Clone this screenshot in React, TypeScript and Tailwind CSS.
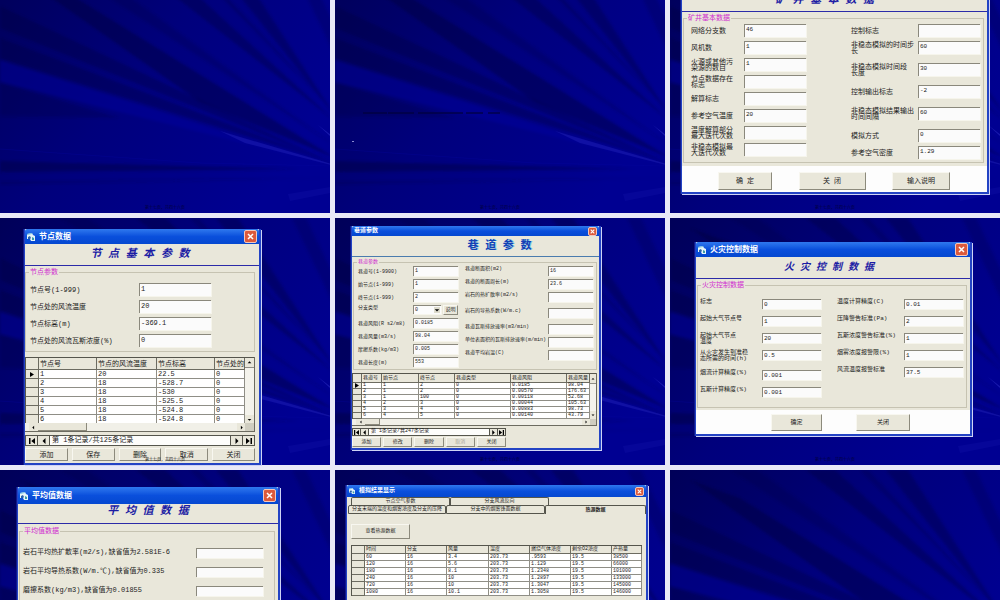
import React, { useId } from 'react';

type FieldData = { label: string; value?: string; gap?: string };

type GridData = {
    headers: string[];
    widths: string[];
    rows: string[][];
};

const mineLeft: FieldData[] = [
    { label: '网络分支数', value: '46', gap: 'mb-1' },
    { label: '风机数', value: '1', gap: 'mb-1' },
    { label: '火源或其他污\n染源的数目', value: '1', gap: 'mb-1' },
    { label: '节点数据存在\n标志', gap: 'mb-1' },
    { label: '解算标志', gap: 'mb-1' },
    { label: '参考空气温度', value: '20', gap: 'mb-1' },
    { label: '温度解算部分\n最大迭代次数', gap: 'mb-1' },
    { label: '非稳态模拟最\n大迭代次数' },
];

const mineRight: FieldData[] = [
    { label: '控制标志', gap: 'mb-1' },
    { label: '非稳态模拟的时间步\n长', value: '60', gap: 'mb-[9px]' },
    { label: '非稳态模拟时间段\n长度', value: '30', gap: 'mb-[9px]' },
    { label: '控制输出标志', value: '-2', gap: 'mb-[9px]' },
    { label: '非稳态模拟结果输出\n时间间隔', value: '60', gap: 'mb-[9px]' },
    { label: '模拟方式', value: '0', gap: 'mb-1' },
    { label: '参考空气密度', value: '1.29' },
];

const nodeFields: FieldData[] = [
    { label: '节点号(1-999)', value: '1', gap: 'mb-1' },
    { label: '节点处的风流温度', value: '20', gap: 'mb-1' },
    { label: '节点标高(m)', value: '-369.1', gap: 'mb-1' },
    { label: '节点处的风流瓦斯浓度(%)', value: '0' },
];

const nodeGrid: GridData = {
    headers: ['节点号', '节点的风流温度', '节点标高', '节点处的'],
    widths: ['w-[58px]', 'w-[60px]', 'w-[58px]', ''],
    rows: [
        ['1', '20', '22.5', '0'],
        ['2', '18', '-528.7', '0'],
        ['3', '18', '-530', '0'],
        ['4', '18', '-525.5', '0'],
        ['5', '18', '-524.8', '0'],
        ['6', '18', '-524.8', '0'],
    ],
};

const roadRight: FieldData[] = [
    { label: '巷道断面积(m2)', value: '16', gap: 'mb-[3px]' },
    { label: '巷道的断面周长(m)', value: '23.6', gap: 'mb-[3px]' },
    { label: '岩石的热扩散率(m2/s)', gap: 'mb-[6px]' },
    { label: '岩石的导热系数(W/m.c)', gap: 'mb-[6px]' },
    { label: '巷道瓦斯排放速率(m3/min)', gap: 'mb-[3px]' },
    { label: '单位表面积的瓦斯排放速率(m/min)', gap: 'mb-[3px]' },
    { label: '巷道平均岩温(C)' },
];

const roadTop: FieldData[] = [
    { label: '巷道号(1-9900)', value: '1', gap: 'mb-[3px]' },
    { label: '始节点(1-999)', value: '1', gap: 'mb-[3px]' },
    { label: '终节点(1-999)', value: '2', gap: 'mb-[3px]' },
];

const roadBottom: FieldData[] = [
    { label: '巷道风阻(R s2/m8)', value: '0.0185', gap: 'mb-[3px]' },
    { label: '巷道风量(m3/s)', value: '98.04', gap: 'mb-[3px]' },
    { label: '摩擦系数(kg/m3)', value: '0.005', gap: 'mb-[3px]' },
    { label: '巷道长度(m)', value: '553' },
];

const roadGrid: GridData = {
    headers: ['巷道号', '始节点', '终节点', '巷道类型', '巷道风阻', '巷道风量'],
    widths: ['w-[20px]', 'w-[37px]', 'w-[36px]', 'w-[56px]', 'w-[56px]', ''],
    rows: [
        ['1', '1', '2', '0', '0.0185', '98.04'],
        ['2', '1', '2', '0', '0.00570', '176.63'],
        ['3', '1', '100', '0', '0.00118', '52.68'],
        ['4', '2', '3', '0', '0.00044', '105.63'],
        ['5', '3', '4', '0', '0.00883', '98.73'],
        ['6', '4', '5', '0', '0.00140', '43.79'],
    ],
};

const fireLeft: FieldData[] = [
    { label: '标志', value: '0', gap: 'mb-[7px]' },
    { label: '起始大气节点号', value: '1', gap: 'mb-[7px]' },
    { label: '起始大气节点\n温度', value: '20', gap: 'mb-[7px]' },
    { label: '从火灾发生到准稳\n态所需的时间(h)', value: '0.5', gap: 'mb-[10px]' },
    { label: '烟流计算精度(%)', value: '0.001', gap: 'mb-[7px]' },
    { label: '瓦斯计算精度(%)', value: '0.001' },
];

const fireRight: FieldData[] = [
    { label: '温度计算精度(C)', value: '0.01', gap: 'mb-[7px]' },
    { label: '压降警告标准(Pa)', value: '2', gap: 'mb-[7px]' },
    { label: '瓦斯浓度警告标准(%)', value: '1', gap: 'mb-[7px]' },
    { label: '烟雾浓度报警限(%)', value: '1', gap: 'mb-[7px]' },
    { label: '风流温度报警标准', value: '37.5' },
];

const averageFields: FieldData[] = [
    { label: '岩石平均热扩散率(m2/s),缺省值为2.581E-6', gap: 'mb-[9px]' },
    { label: '岩石平均导热系数(W/m.℃),缺省值为0.335', gap: 'mb-[9px]' },
    { label: '磨擦系数(kg/m3),缺省值为0.01855' },
];

const resultGrid: GridData = {
    headers: ['时间', '分支', '风量', '温度', '燃烧气体浓度', '剩余O2浓度', '产热量'],
    widths: ['w-[41px]', 'w-[41px]', 'w-[42px]', 'w-[41px]', 'w-[41px]', 'w-[41px]', ''],
    rows: [
        ['60', '16', '3.4', '203.73', '.9593', '19.5', '38500'],
        ['120', '16', '5.6', '203.73', '1.129', '19.5', '66000'],
        ['180', '16', '8.1', '203.73', '1.2348', '19.5', '101000'],
        ['240', '16', '10', '203.73', '1.2897', '19.5', '133000'],
        ['720', '16', '10', '203.73', '1.3047', '19.5', '145000'],
        ['1080', '16', '10.1', '203.73', '1.3058', '19.5', '146000'],
    ],
};

const Rays: React.FC = () => {
    const base = useId();
    const soft = useId();
    return (
        <svg className="absolute inset-0 h-full w-full" viewBox="0 0 330 247" preserveAspectRatio="none" aria-hidden="true">
            <defs>
                <linearGradient id={base} x1="0" y1="0" x2="1" y2="0.6">
                    <stop offset="0" stopColor="#000058" />
                    <stop offset="0.5" stopColor="#00007c" />
                    <stop offset="1" stopColor="#000092" />
                </linearGradient>
                <filter id={soft} x="-5%" y="-5%" width="110%" height="110%">
                    <feGaussianBlur stdDeviation="1.8" />
                </filter>
            </defs>
            <rect width="330" height="247" fill={`url(#${base})`} />
            <g fill="#000038" filter={`url(#${soft})`}>
                <path d="M0 40 L0 62 L335 198 Z" opacity="0.3" />
                <path d="M0 72 L0 92 L335 198 Z" opacity="0.3" />
                <path d="M20 10 L70 28 L335 192 L200 136 Z" opacity="0.4" />
                <path d="M60 0 L88 0 L335 180 Z" opacity="0.2" />
                <path d="M136 0 L165 0 L335 155 Z" opacity="0.35" />
                <path d="M190 0 L198 0 L335 146 Z" opacity="0.25" />
                <path d="M216 0 L238 0 L335 150 Z" opacity="0.35" />
                <path d="M292 0 L306 0 L335 60 L335 90 Z" opacity="0.2" />
                <path d="M0 117 L0 150 L120 152 Z" opacity="0.25" />
                <path d="M0 195 L0 206 L300 203 Z" opacity="0.4" />
                <path d="M0 216 L0 218 L330 212 Z" opacity="0.3" />
            </g>
            <path d="M0 94 L0 116 L335 200 L230 168 Z" fill="#0000a4" opacity="0.4" filter={`url(#${soft})`} />
            <path d="M220 165 L335 199 L335 200 L245 177 Z" fill="#2020b4" opacity="0.5" />
            <path d="M318 159 L331 169 L331 171 Z" fill="#2a2ac0" opacity="0.6" />
            <path d="M288 228 L330 221 L330 227 L290 235 Z" fill="#1212a6" opacity="0.35" />
            <path d="M0 183 L200 197 L330 200" stroke="#0808a0" strokeWidth="1" fill="none" opacity="0.3" />
        </svg>
    );
};

const Slide: React.FC<{ className?: string; footer?: string; children?: React.ReactNode }> = ({ className = '', footer = 'text-[#00003c]', children }) => (
    <section className={`relative flex min-h-[247px] min-w-0 flex-col bg-[#000078] ${className}`}>
        <Rays />
        {children}
        <p className={`absolute inset-x-0 bottom-[2px] text-center text-[4px] leading-[5px] ${footer}`}>第十七页，共四十六页</p>
    </section>
);

const AppIcon: React.FC<{ className: string }> = ({ className }) => (
    <svg className={className} viewBox="0 0 8 8" aria-hidden="true">
        <path d="M0 1 L5 0 L6 2 L8 3 L8 8 L4 8 L3 6 L0 6 Z" fill="#e6f4f8" />
        <path d="M0 1 L5 0 L5 1 L0 2 Z" fill="#7cc4e0" />
        <path d="M1 4 L3 3 L4 5 L3 6 L1 6 Z" fill="#2a62a8" />
        <path d="M5 4 L7 5 L7 7 L5 7 Z" fill="#3c9ca8" />
    </svg>
);

const Dialog: React.FC<{
    title: string;
    heading?: string;
    small?: boolean;
    icon?: boolean;
    titleHeight: string;
    headingStyle?: string;
    className?: string;
    children: React.ReactNode;
}> = ({ title, heading, small = false, icon = true, titleHeight, headingStyle = '', className = '', children }) => (
    <div className={`relative flex flex-col border-r-2 border-b-2 border-l border-[#2343c4] bg-[#e9e7da] shadow-[1px_1px_0_#cfd3f5,-1px_0_0_#101a8c] ${className}`}>
        <header className={`flex items-center justify-between rounded-t-[2px] bg-linear-to-b from-[#2f78ee] via-[#0a4fdc] to-[#0548d0] px-0.5 text-white ${titleHeight}`}>
            <span className={`flex items-center gap-1 font-bold ${small ? 'text-[6px] leading-[8px]' : 'text-[8px] leading-[10px]'}`}>
                {icon && <AppIcon className={small ? 'h-[6px] w-[6px]' : 'h-2 w-2'} />}
                {title}
            </span>
            <button
                type="button"
                aria-label="关闭窗口"
                className={`flex items-center justify-center rounded-[2px] border border-[#f4c8bc] bg-[#dc5a3c] ${small ? 'h-[9px] w-[9px]' : 'h-[13px] w-[13px]'}`}
            >
                <svg className={small ? 'h-[5px] w-[5px]' : 'h-[7px] w-[7px]'} viewBox="0 0 7 7" aria-hidden="true">
                    <path d="M1 1 L6 6 M6 1 L1 6" stroke="#ffffff" strokeWidth="1.5" />
                </svg>
            </button>
        </header>
        {heading && (
            <h2 className={`flex items-center justify-center border-b font-bold whitespace-pre ${headingStyle}`}>{heading}</h2>
        )}
        {children}
    </div>
);

const navyHeading = 'italic border-[#2b2ba8] text-[#1c1ca4]';

const Group: React.FC<{ title: string; small?: boolean; className?: string; children: React.ReactNode }> = ({ title, small = false, className = '', children }) => (
    <fieldset className={`min-w-0 border border-[#c6c3b2] ${className}`}>
        <legend className={`ml-[3px] px-px text-[#d02cd0] ${small ? 'text-[5px] leading-[6px]' : 'text-[7px] leading-[7px]'}`}>{title}</legend>
        {children}
    </fieldset>
);

const sunken = 'border-t border-l border-[#8a887c] bg-[#fbfbfb] shadow-[1px_1px_0_#f6f5ec]';

const Field: React.FC<FieldData & { align?: string; labelStyle: string; inputStyle: string }> = ({ label, value = '', gap = '', align = 'items-start', labelStyle, inputStyle }) => {
    const id = useId();
    return (
        <div className={`flex justify-between ${align} ${gap}`}>
            <label htmlFor={id} className={`whitespace-pre ${labelStyle}`}>{label}</label>
            <input id={id} defaultValue={value} className={`shrink-0 rounded-none px-px ${sunken} ${inputStyle}`} />
        </div>
    );
};

const VbButton: React.FC<{ className: string; disabled?: boolean; children: React.ReactNode }> = ({ className, disabled, children }) => (
    <button
        type="button"
        disabled={disabled}
        className={`border-t border-r border-b border-l border-t-[#f8f7f0] border-r-[#8c8a7c] border-b-[#8c8a7c] border-l-[#f8f7f0] bg-[#e9e7da] whitespace-pre disabled:text-[#a8a698] ${className}`}
    >
        {children}
    </button>
);

const DataGrid: React.FC<{ data: GridData; marker: string; head: string; cell: string; showPointer?: boolean }> = ({ data, marker, head, cell, showPointer = false }) => (
    <table className="w-full table-fixed border-separate border-spacing-0 border-t border-l border-[#55554c] bg-white text-left">
        <colgroup>
            <col className={marker} />
            {data.widths.map((width, i) => <col key={i} className={width} />)}
        </colgroup>
        <thead className="bg-[#e9e7da]">
            <tr>
                <th className={`border-r border-b border-[#6c6b60] p-0 ${head}`} />
                {data.headers.map(name => (
                    <th key={name} scope="col" className={`border-r border-b border-[#6c6b60] p-0 pl-px font-normal whitespace-nowrap ${head}`}>{name}</th>
                ))}
            </tr>
        </thead>
        <tbody>
            {data.rows.map((row, r) => (
                <tr key={r}>
                    <td className={`border-r border-b border-[#6c6b60] bg-[#e9e7da] p-0 ${cell}`}>
                        {showPointer && r === 0 && (
                            <svg className="mx-auto block h-[5px] w-[4px]" viewBox="0 0 4 5" aria-hidden="true"><path d="M0 0 L4 2.5 L0 5 Z" /></svg>
                        )}
                    </td>
                    {row.map((text, c) => (
                        <td key={c} className={`border-r border-b border-[#8f8e86] p-0 pl-px whitespace-nowrap ${cell}`}>{text}</td>
                    ))}
                </tr>
            ))}
        </tbody>
    </table>
);

const arrowPaths = {
    up: 'M1 5 L4 2 L7 5 Z',
    down: 'M1 3 L4 6 L7 3 Z',
    left: 'M5 1 L2 4 L5 7 Z',
    right: 'M3 1 L6 4 L3 7 Z',
    prev: 'M6 0 L2 4 L6 8 Z',
    next: 'M2 0 L6 4 L2 8 Z',
    first: 'M0 0 H2 V8 H0 Z M8 0 L3 4 L8 8 Z',
    last: 'M6 0 H8 V8 H6 Z M0 0 L5 4 L0 8 Z',
};

const ArrowButton: React.FC<{ kind: keyof typeof arrowPaths; label: string; box: string; icon: string }> = ({ kind, label, box, icon }) => (
    <button type="button" aria-label={label} className={`flex shrink-0 items-center justify-center bg-[#e9e7da] ${box}`}>
        <svg className={icon} viewBox="0 0 8 8" aria-hidden="true"><path d={arrowPaths[kind]} /></svg>
    </button>
);

const GridPane: React.FC<{ body: string; bar: string; side: string; icon: string; thumb: string; children: React.ReactNode }> = ({ body, bar, side, icon, thumb, children }) => (
    <div className="border-r border-b border-[#6c6b60]">
        <div className={`flex ${body}`}>
            <div className="min-w-0 flex-1 overflow-hidden">{children}</div>
            <div className={`flex shrink-0 flex-col justify-between border-t border-[#55554c] bg-[#f4f3ec] ${side}`}>
                <ArrowButton kind="up" label="向上滚动" box="h-[10px] w-full border-b border-[#8f8e86]" icon={icon} />
                <ArrowButton kind="down" label="向下滚动" box="h-[8px] w-full" icon={icon} />
            </div>
        </div>
        <div className={`flex items-stretch bg-[#f1f0e8] ${bar}`}>
            <ArrowButton kind="left" label="向左滚动" box="ml-1 w-[9px]" icon={icon} />
            <div className={`border-r border-b border-[#8c8a7c] bg-[#e9e7da] ${thumb}`} />
            <div className="flex-1" />
            <ArrowButton kind="right" label="向右滚动" box="w-[8px]" icon={icon} />
            <div className={`bg-[#cfcdc0] ${side}`} />
        </div>
    </div>
);

const RecordNav: React.FC<{ text: string; className: string; box: string; icon: string }> = ({ text, className, box, icon }) => (
    <nav className={`flex items-stretch border border-[#55554c] bg-[#fdfdfb] ${className}`}>
        <ArrowButton kind="first" label="第一条" box={`border-r border-[#55554c] ${box}`} icon={icon} />
        <ArrowButton kind="prev" label="上一条" box={`border-r border-[#55554c] ${box}`} icon={icon} />
        <span className="flex flex-1 items-center pl-0.5 whitespace-pre">{text}</span>
        <ArrowButton kind="next" label="下一条" box={`border-l border-[#55554c] ${box}`} icon={icon} />
        <ArrowButton kind="last" label="最后一条" box={`border-l border-[#55554c] ${box}`} icon={icon} />
    </nav>
);

const mineLabel = 'flex h-[13px] items-center text-[7px] leading-[6px]';
const mineInput = 'h-[13px] w-[62px] pb-[3px] text-[6px]';

const MineDialog: React.FC = () => (
    <Dialog title="矿井基本数据" heading="矿 井 基 本 数 据" titleHeight="h-[16px]" headingStyle={`h-[22px] pr-5 text-[11px] ${navyHeading}`}>
        <Group title="矿井基本数据" className="mt-[3px] mr-[3px] ml-px">
            <div className="flex justify-between pt-0.5 pr-[3px] pb-[3px] pl-[7px]">
                <div className="w-[115px]">
                    {mineLeft.map(f => <Field key={f.label} {...f} align="items-center" labelStyle={mineLabel} inputStyle={mineInput} />)}
                </div>
                <div className="w-[129px]">
                    {mineRight.map(f => <Field key={f.label} {...f} align="items-center" labelStyle={mineLabel} inputStyle={mineInput} />)}
                </div>
            </div>
        </Group>
        <div className="mt-[3px] flex justify-between bg-[#fdfdfd] pt-[6px] pr-[37px] pb-0.5 pl-9 text-[7px]">
            <VbButton className="h-[18px] w-[54px]">确 定</VbButton>
            <VbButton className="h-[18px] w-[67px]">关 闭</VbButton>
            <VbButton className="h-[18px] w-[58px]">输入说明</VbButton>
        </div>
    </Dialog>
);

const NodeDialog: React.FC = () => (
    <Dialog title="节点数据" heading="节 点 基 本 参 数" titleHeight="h-[15px]" headingStyle={`h-[22px] pr-1 text-[11px] ${navyHeading}`}>
        <Group title="节点参数" className="mt-[3px] mr-1">
            <div className="pt-[7px] pr-[43px] pb-1 pl-1">
                {nodeFields.map(f => <Field key={f.label} {...f} align="items-center" labelStyle="text-[7px] leading-[8px]" inputStyle="h-[13px] w-[72px] pb-[3px] text-[7px]" />)}
            </div>
        </Group>
        <div className="mt-[5px] mr-1">
            <GridPane body="h-[66px]" bar="h-[8px]" side="w-[9px]" icon="h-[5px] w-[5px]" thumb="w-[49px]">
                <DataGrid data={nodeGrid} marker="w-[13px]" head="h-[12px] text-[7px] leading-[10px]" cell="h-[9px] text-[7px] leading-[8px]" showPointer />
            </GridPane>
            <RecordNav text="第 1条记录/共125条记录" className="mt-[3px] h-[11px] text-[7px]" box="w-[12px]" icon="h-[6px] w-[6px]" />
            <div className="mt-[2px] mb-0.5 flex gap-1 text-[7px]">
                {['添加', '保存', '删除', '取消', '关闭'].map(name => <VbButton key={name} className="h-[13px] flex-1 leading-[8px]">{name}</VbButton>)}
            </div>
        </div>
    </Dialog>
);

const roadLabel = 'text-[5px] leading-[6px] pt-[3px]';
const roadInput = 'h-[10px] w-[45px] pb-[2px] text-[5px]';

const RoadDialog: React.FC = () => (
    <Dialog title="巷道参数" heading="巷 道 参 数" small icon={false} titleHeight="h-[10px]" headingStyle="h-[21px] pl-12 text-[11px] border-[#4a7cae] text-[#1440b4] [text-shadow:1px_0_0_#7fd0ea]">
        <Group title="巷道参数" small className="mt-[2px] mr-[2px] ml-px">
            <div className="flex justify-between pt-px pr-[3px] pb-[2px] pl-1">
                <div className="w-[100px]">
                    {roadTop.map(f => <Field key={f.label} {...f} labelStyle={roadLabel} inputStyle={roadInput} />)}
                    <div className="mb-[3px] flex h-[10px] items-start">
                        <label htmlFor="branch-type" className="w-[55px] text-[5px] leading-[6px]">分支类型</label>
                        <div className={`flex h-[9px] w-[28px] items-stretch ${sunken}`}>
                            <select id="branch-type" defaultValue="0" className="min-w-0 flex-1 appearance-none bg-transparent pl-px text-[5px] leading-[8px]">
                                <option value="0">0</option>
                                <option value="1">1</option>
                            </select>
                            <svg className="my-px mr-px h-[6px] w-[6px] bg-[#dddbcc]" viewBox="0 0 8 8" aria-hidden="true"><path d={arrowPaths.down} /></svg>
                        </div>
                        <VbButton className="ml-[2px] h-[10px] w-[15px] text-[5px] leading-[6px]">说明</VbButton>
                    </div>
                    {roadBottom.map(f => <Field key={f.label} {...f} labelStyle={roadLabel} inputStyle={roadInput} />)}
                </div>
                <div className="w-[128px]">
                    {roadRight.map(f => <Field key={f.label} {...f} labelStyle="text-[5px] leading-[6px]" inputStyle={roadInput} />)}
                </div>
            </div>
        </Group>
        <div className="mt-[3px] mr-[2px]">
            <GridPane body="h-[46px]" bar="h-[6px]" side="w-[6px]" icon="h-[4px] w-[4px]" thumb="w-[15px]">
                <DataGrid data={roadGrid} marker="w-[9px]" head="h-[9px] text-[5px] leading-[7px]" cell="h-[6px] text-[5px] leading-[5px]" showPointer />
            </GridPane>
        </div>
        <div className="mr-auto w-[154px]">
            <RecordNav text="第 1条记录/共247条记录" className="mt-[2px] h-[8px] text-[5px]" box="w-[8px]" icon="h-[5px] w-[5px]" />
            <div className="mt-px mb-px flex gap-[2px] text-[5px]">
                {['添加', '修改', '删除', '取消', '关闭'].map(name => <VbButton key={name} disabled={name === '取消'} className="h-[10px] flex-1 leading-[6px]">{name}</VbButton>)}
            </div>
        </div>
    </Dialog>
);

const fireLabel = 'h-[10px] text-[6px] leading-[6px]';
const fireInput = 'h-[10px] w-[59px] text-[6px]';

const FireDialog: React.FC = () => (
    <Dialog title="火灾控制数据" heading="火 灾 控 制 数 据" titleHeight="h-[15px]" headingStyle={`h-[22px] pr-2 text-[10px] ${navyHeading}`}>
        <Group title="火灾控制数据" className="mt-[3px] mr-[3px] ml-px">
            <div className="flex justify-between pt-[10px] pr-[3px] pb-[10px] pl-[2px]">
                <div className="w-[121px]">
                    {fireLeft.map(f => <Field key={f.label} {...f} labelStyle={fireLabel} inputStyle={fireInput} />)}
                </div>
                <div className="w-[126px]">
                    {fireRight.map(f => <Field key={f.label} {...f} labelStyle={fireLabel} inputStyle={fireInput} />)}
                </div>
            </div>
        </Group>
        <div className="mt-[2px] flex gap-[34px] bg-[#fdfdfd] pt-1 pb-[3px] pl-[75px] text-[6px]">
            <VbButton className="h-[17px] w-[51px]">确定</VbButton>
            <VbButton className="h-[17px] w-[54px]">关闭</VbButton>
        </div>
    </Dialog>
);

const AverageDialog: React.FC = () => (
    <Dialog title="平均值数据" heading="平 均 值 数 据" titleHeight="h-[17px]" headingStyle={`h-[20px] pb-1 text-[11px] ${navyHeading}`} className="flex-1">
        <Group title="平均值数据" className="mt-1 mr-[3px] ml-px flex-1">
            <div className="pt-[13px] pr-[11px] pl-[3px]">
                {averageFields.map(f => <Field key={f.label} {...f} labelStyle="text-[7px] leading-[8px]" inputStyle="h-[10px] w-[67px] text-[7px]" />)}
            </div>
        </Group>
    </Dialog>
);

const tab = 'rounded-t-[2px] border-t border-r border-l border-[#55554c] text-center text-[5px] leading-[7px] whitespace-nowrap';

const ResultDialog: React.FC = () => (
    <Dialog title="模拟结果显示" small titleHeight="h-[12px]" className="flex-1">
        <div role="tablist">
            <div className="flex pl-1">
                <button type="button" role="tab" className={`h-[8px] w-[99px] ${tab}`}>节点空气参数</button>
                <button type="button" role="tab" className={`h-[8px] w-[99px] ${tab}`}>分支风流反向</button>
            </div>
            <div className="flex pl-px">
                <button type="button" role="tab" className={`h-[9px] w-[98px] border-b ${tab}`}>分支末端的温度和烟雾浓度及分支的压降</button>
                <button type="button" role="tab" className={`h-[9px] w-[99px] border-b ${tab}`}>分支中的烟雾锋面数据</button>
                <button type="button" role="tab" aria-selected="true" className={`h-[9px] flex-1 font-bold ${tab}`}>热源数据</button>
            </div>
        </div>
        <VbButton className="mt-[10px] ml-1 h-[15px] w-[59px] text-[5px]">查看热源数据</VbButton>
        <div className="mt-[6px] mr-1 ml-1">
            <DataGrid data={resultGrid} marker="w-[13px]" head="h-[8px] text-[5px] leading-[7px]" cell="h-[7px] text-[5px] leading-[6px]" />
        </div>
    </Dialog>
);

const App: React.FC = () => (
    <main className="h-screen overflow-hidden bg-[#e9e9f7] font-['Liberation_Mono','Noto_Sans_CJK_SC',monospace] text-[#1c1c1c]">
        <div className="-mt-[34px] grid grid-cols-3 gap-[5px]">
            <Slide />
            <Slide>
                <svg className="absolute inset-0 h-full w-full" viewBox="0 0 330 247" aria-hidden="true">
                    <path d="M28 147 H165" stroke="#00003c" strokeWidth="2" strokeDasharray="24 1 26 4 45 3 17 5" opacity="0.6" />
                    <rect x="17" y="175" width="2" height="1" fill="#8a8ad0" />
                </svg>
            </Slide>
            <Slide className="justify-end px-[11px] pb-[19px]">
                <MineDialog />
            </Slide>
            <Slide className="pt-[11px] pr-[69px] pl-[24px]" footer="text-[#1c1c1c]">
                <NodeDialog />
            </Slide>
            <Slide className="pt-2 pr-[64px] pl-4">
                <RoadDialog />
            </Slide>
            <Slide className="pt-6 pr-7 pl-[25px]">
                <FireDialog />
            </Slide>
            <Slide className="pt-[17px] pr-[50px] pl-[17px]">
                <AverageDialog />
            </Slide>
            <Slide className="pt-[15px] pr-[17px] pl-[11px]">
                <ResultDialog />
            </Slide>
            <Slide />
        </div>
    </main>
);

export default App;
